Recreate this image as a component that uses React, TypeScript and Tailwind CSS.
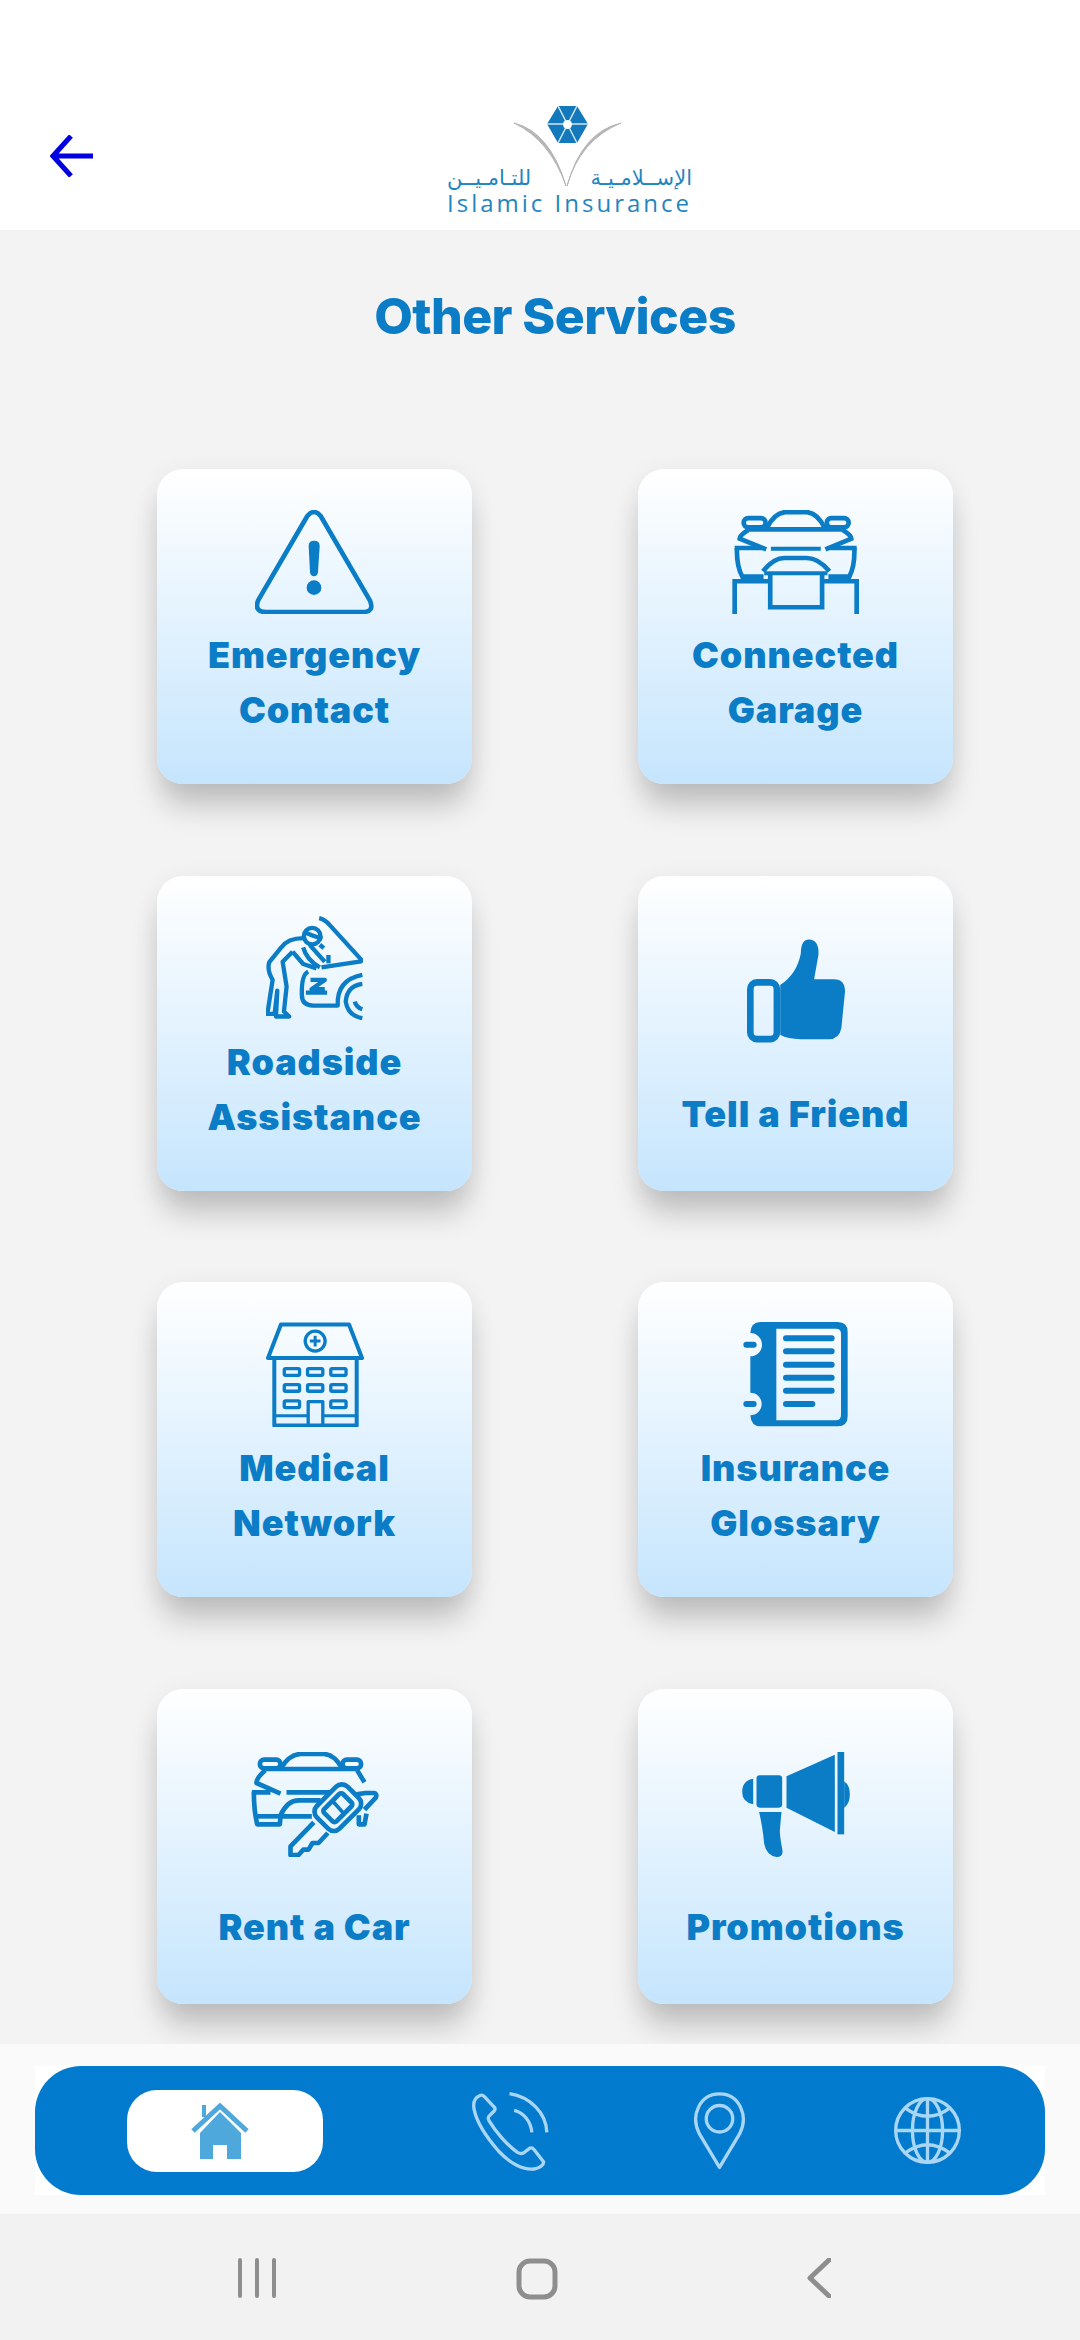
import React from 'react';

const Warning = () => (
  <svg width="119" height="104" viewBox="345 178 357 312" fill="none" stroke="currentColor" strokeWidth="14">
    <path d="M502 196 Q522 172 542 196 L690 450 Q704 484 668 484 L378 484 Q342 484 354 450 Z" strokeLinejoin="round" />
    <path d="M506 286 Q506 270 522 270 Q539 270 539 286 L534 365 Q532 377 522 377 Q512 377 510 365 Z" fill="currentColor" stroke="none" />
    <circle cx="522" cy="411" r="22" fill="currentColor" stroke="none" />
  </svg>
);

const Garage = () => (
  <svg width="127" height="104" viewBox="335 178 382 312" fill="none" stroke="currentColor" strokeWidth="14">
    <path d="M440 232 Q462 186 495 184 L560 184 Q592 186 614 232" strokeLinejoin="round" />
    <rect x="370" y="202" width="66" height="28" rx="14" />
    <rect x="620" y="202" width="66" height="28" rx="14" />
    <path d="M384 238 Q358 254 358 264 L438 296 M668 238 Q694 254 694 264 L616 296" />
    <path d="M384 236 H668" />
    <path d="M452 294 H602" strokeWidth="12" />
    <path d="M343 292 H425 M628 292 H710" />
    <path d="M350 292 Q348 345 366 378 H430 M703 292 Q705 345 688 378 H625" />
    <path d="M428 362 Q460 322 492 322 L560 322 Q595 322 628 362" />
    <path d="M432 368 H622" strokeWidth="12" />
    <path d="M450 368 V470 H606 V368" />
    <path d="M343 491 V392 H450 M606 392 H710 V491" />
  </svg>
);

const Mechanic = () => (
  <svg width="97" height="104" viewBox="378 168 292 312" fill="none" stroke="currentColor" strokeWidth="13" strokeLinejoin="round">
    <path d="M538 174 Q556 178 570 195 L664 298 L664 304 L545 322" />
    <circle cx="517" cy="228" r="25" />
    <path d="M497 218 Q520 228 548 236 M540 254 L552 264" />
    <path d="M497 234 Q445 232 424 262 L388 306 Q380 330 398 360 L382 462 H404 L412 392 L408 470 H448 L432 455 L440 380 L428 305 L458 275" />
    <path d="M490 262 Q500 300 540 322 M510 255 L555 305 M566 285 V310" />
    <path d="M458 275 L490 312 L530 325" />
    <path d="M505 335 Q484 345 486 405 Q486 436 520 437 H594 Q590 360 668 345" />
    <path d="M668 372 Q622 378 618 425 Q625 468 668 475" />
    <path d="M645 425 Q650 442 668 448" />
    <path d="M512 360 H555 L515 388 H555 M498 398 H562" />
  </svg>
);

const Thumb = () => (
  <svg width="98" height="104" viewBox="378 238 295 310" fill="none">
    <rect x="388" y="367" width="80" height="171" rx="20" stroke="currentColor" strokeWidth="20" />
    <path d="M478 375 Q528 342 540 280 Q540 238 565 238 Q596 240 593 285 L580 358 H640 Q673 358 673 395 L662 505 Q655 538 625 538 H540 Q500 538 478 525 Z" fill="currentColor" />
  </svg>
);

const Hospital = () => (
  <svg width="98" height="105" viewBox="105 65 295 315" fill="none" stroke="currentColor" strokeWidth="12" strokeLinejoin="round">
    <path d="M150 72 H355 L394 173 H111 Z" />
    <circle cx="253" cy="122" r="30" strokeWidth="10" />
    <path d="M253 106 V138 M237 122 H269" strokeWidth="9" />
    <path d="M130 173 V376 H378 V173" />
    <rect x="160" y="205" width="46" height="20" rx="4" strokeWidth="10" />
    <rect x="230" y="205" width="46" height="20" rx="4" strokeWidth="10" />
    <rect x="300" y="205" width="46" height="20" rx="4" strokeWidth="10" />
    <rect x="160" y="253" width="46" height="20" rx="4" strokeWidth="10" />
    <rect x="230" y="253" width="46" height="20" rx="4" strokeWidth="10" />
    <rect x="300" y="253" width="46" height="20" rx="4" strokeWidth="10" />
    <rect x="160" y="302" width="46" height="20" rx="4" strokeWidth="10" />
    <rect x="300" y="302" width="46" height="20" rx="4" strokeWidth="10" />
    <path d="M232 376 V304 H276 V376" strokeWidth="10" />
    <path d="M130 347 H232 M276 347 H378" strokeWidth="9" />
  </svg>
);

const Notebook = () => (
  <svg width="105" height="105" viewBox="98 65 315 315" fill="none">
    <path
      fillRule="evenodd"
      d="M150 65 H382 Q412 65 412 95 V348 Q412 378 382 378 H150 Q122 378 120 345 A34 34 0 0 0 120 277 V168 A34 34 0 0 0 120 98 Q122 65 150 65 Z M198 85 V360 H376 Q392 360 392 344 V100 Q392 85 376 85 Z"
      fill="currentColor"
    />
    <g stroke="currentColor" strokeWidth="18" strokeLinecap="round">
      <path d="M227 114 H364 M227 153 H364 M227 193 H364 M227 232 H364 M227 271 H364 M227 311 H306" />
      <path d="M108 133 H130 M108 311 H130" />
    </g>
  </svg>
);

const CarKey = () => (
  <svg width="128" height="105" viewBox="62 95 383 315" fill="none" stroke="currentColor" strokeWidth="14" strokeLinejoin="round">
    <path d="M152 142 Q178 102 210 101 L280 101 Q310 102 334 142" />
    <rect x="88" y="118" width="62" height="26" rx="13" />
    <rect x="336" y="118" width="56" height="26" rx="13" />
    <path d="M104 150 Q76 176 78 188 L150 220 M380 150 L402 186" />
    <path d="M104 146 H376" />
    <path d="M64 216 H120 M168 216 H310" />
    <path d="M70 216 Q70 270 80 312 H148 L150 288 H244" />
    <path d="M150 285 Q170 240 205 240 H270" />
    <path d="M80 288 H148" />
    <path d="M385 285 V312 H402 L408 280" />
    <path d="M378 222 L405 218 H432 Q440 222 436 232 L402 268" />
    <path d="M250 306 L180 378 V404 H204 L218 388 H234 L246 368 H264 L292 338" fill="#ecf6ff" />
    <rect x="257" y="214" width="130" height="96" rx="24" transform="rotate(-45 322 262)" fill="#ecf6ff" />
    <rect x="282" y="236" width="80" height="52" rx="8" transform="rotate(-45 322 262)" />
    <path d="M304 240 L344 284" strokeWidth="11" />
  </svg>
);

const Megaphone = () => (
  <svg width="108" height="105" viewBox="92 95 323 315" fill="currentColor">
    <path d="M125 175 Q92 180 92 215 Q92 245 125 252 Z" />
    <rect x="135" y="165" width="77" height="97" rx="10" />
    <path d="M225 168 L370 103 V335 L225 262 Z" />
    <rect x="378" y="95" width="20" height="247" />
    <path d="M398 183 Q415 195 415 222 Q415 250 398 263 Z" />
    <path d="M143 275 H210 L205 330 Q205 350 212 385 Q218 410 195 410 Q165 405 158 370 Q155 330 143 275 Z" />
  </svg>
);

const services = [
  { lines: ['Emergency', 'Contact'], icon: <Warning /> },
  { lines: ['Connected', 'Garage'], icon: <Garage /> },
  { lines: ['Roadside', 'Assistance'], icon: <Mechanic /> },
  { lines: ['Tell a Friend'], icon: <Thumb /> },
  { lines: ['Medical', 'Network'], icon: <Hospital /> },
  { lines: ['Insurance', 'Glossary'], icon: <Notebook /> },
  { lines: ['Rent a Car'], icon: <CarKey /> },
  { lines: ['Promotions'], icon: <Megaphone /> },
];

const ServiceCard = ({ lines, icon }: { lines: string[]; icon: React.ReactNode }) => {
  const single = lines.length === 1;
  return (
    <div
      className={`flex h-[315px] w-[315px] flex-col items-center rounded-[26px] bg-linear-to-b from-white to-[#c5e5fd] text-[#0b7cc6] shadow-[0_26px_30px_-4px_rgba(0,0,0,0.2),0_4px_26px_rgba(0,0,0,0.06)] ${single ? 'pt-[63px]' : 'pt-[40px]'}`}
    >
      <div className="flex h-[105px] items-center justify-center">{icon}</div>
      <div className={`text-center font-['Inter',sans-serif] text-[36px] leading-[55px] font-black tracking-[0.9px] whitespace-nowrap ${single ? 'mt-[43px]' : 'mt-[14px]'}`}>
        {lines.map((l) => (
          <div key={l}>{l}</div>
        ))}
      </div>
    </div>
  );
};

const Logo = () => (
  <div className="flex w-[245px] flex-col items-center text-[#1f86bf]">
    <svg width="110" height="82" viewBox="0 0 110 82" fill="none" className="ml-[-1px]">
      <path d="M0 17 Q36 26 52 80 Q36 34 0 17 Z M107 17 Q68 26 53 80 Q66 34 107 17 Z" fill="#b5b5b5" stroke="#b5b5b5" strokeWidth="1" />
      <path d="M44 0 H63 L74 18 L63 37 H44 L33 18 Z" fill="#1379bb" />
      <path d="M44 0 L63 37 M63 0 L44 37 M33 18 H74" stroke="#cfe6f5" strokeWidth="1.5" />
      <circle cx="53.5" cy="18.5" r="4.5" fill="white" />
    </svg>
    <div className="mt-[-24px] flex h-[28px] w-full items-center justify-between font-['DejaVu_Sans',sans-serif] text-[21px] leading-[28px]">
      <span dir="rtl">للتـامـيــن</span>
      <span dir="rtl">الإســلامـيـة</span>
    </div>
    <div className="mt-[-1px] font-['Open_Sans',sans-serif] text-[24px] leading-[24px] tracking-[3px] whitespace-nowrap">Islamic Insurance</div>
  </div>
);

export default function App() {
  return (
    <div className="flex h-[2340px] w-[1080px] flex-col overflow-hidden bg-[#f3f3f3] font-['Lato',sans-serif]">
      <header className="flex h-[230px] shrink-0 bg-white">
        <button className="mt-[135px] ml-[50px] h-[42px] w-[43px] text-[#0000e0]">
          <svg width="43" height="42" viewBox="0 0 43 42" fill="none" stroke="currentColor" strokeWidth="5">
            <path d="M43 21 H4 M21 1 L3 21 L21 41" />
          </svg>
        </button>
        <div className="mt-[106px] ml-[354px]">
          <Logo />
        </div>
      </header>

      <main className="flex h-[1814px] shrink-0 flex-col pr-[127px] pl-[157px]">
        <h1 className="mt-[56px] h-[60px] text-center font-['Inter',sans-serif] text-[50px] leading-[60px] font-extrabold tracking-[-0.6px] text-[#0b7cc6]">Other Services</h1>
        <div className="mt-[123px] grid grid-cols-[315px_315px] gap-x-[166px] gap-y-[91.6px]">
          {services.map((s) => (
            <ServiceCard key={s.lines[0]} lines={s.lines} icon={s.icon} />
          ))}
        </div>
      </main>

      <div className="relative flex h-[170px] shrink-0 items-start bg-[#fafafa] px-[35px] pt-[22px]">
        <nav className="relative h-[129px] w-[1012px] bg-white">
          <div className="flex h-full w-full items-center rounded-[46px] bg-[#027bce] pl-[92px]">
            <div className="flex h-[82px] w-[196px] items-center justify-center rounded-[30px] bg-white">
              <svg width="58" height="56" viewBox="0 0 58 56" fill="none" className="mr-[10px]">
                <path d="M9 30 L29 9 L50 30 V56 H36 V42 H22 V56 H9 Z" fill="#4fa8dc" />
                <path d="M2 28 L29 3 L56 28" stroke="#4fa8dc" strokeWidth="5" />
                <path d="M13 2 V14" stroke="#4fa8dc" strokeWidth="4" />
              </svg>
            </div>
            <svg width="77" height="80" viewBox="36 20 230 240" fill="none" stroke="#a9d6f5" strokeWidth="10" className="ml-[149px]">
              <path d="M58 34 C44 40 38 55 42 76 C50 115 80 160 115 200 C150 238 190 258 222 254 C240 252 252 240 250 232 L222 196 Q216 188 208 192 L190 206 Q182 210 172 204 C140 182 105 140 86 108 Q82 100 88 94 L102 80 Q108 72 100 66 L72 36 Q66 30 58 34 Z" strokeLinejoin="round" />
              <path d="M148 28 C210 38 258 85 260 144 M162 78 C190 85 212 110 215 144" />
            </svg>
            <svg width="55" height="80" viewBox="696 22 166 240" fill="none" stroke="#a9d6f5" strokeWidth="10" className="ml-[143px]">
              <path d="M779 252 L718 150 C690 95 720 30 779 30 C838 30 868 95 840 150 Z" strokeLinejoin="round" />
              <circle cx="779" cy="105" r="40" />
            </svg>
            <svg width="67" height="67" viewBox="1303 43 200 200" fill="none" stroke="#a9d6f5" strokeWidth="10" className="ml-[147px]">
              <circle cx="1403" cy="143" r="95" />
              <ellipse cx="1403" cy="143" rx="45" ry="95" />
              <path d="M1403 48 V238 M1308 143 H1498 M1337 76 Q1403 125 1469 76 M1337 210 Q1403 161 1469 210" />
            </svg>
          </div>
        </nav>
      </div>

      <div className="flex h-[126px] shrink-0 items-start bg-[#f2f2f2] pt-[44px] text-[#8e8e8e]">
        <svg width="38" height="40" viewBox="0 0 38 40" fill="none" stroke="currentColor" strokeWidth="4" strokeLinecap="round" className="ml-[238px]">
          <path d="M2 2 V38 M19 2 V38 M36 2 V38" />
        </svg>
        <svg width="42" height="42" viewBox="0 0 42 42" fill="none" stroke="currentColor" strokeWidth="5" className="ml-[240px]">
          <rect x="3" y="3" width="36" height="36" rx="11" />
        </svg>
        <svg width="24" height="40" viewBox="0 0 24 40" fill="none" stroke="currentColor" strokeWidth="5" strokeLinecap="round" strokeLinejoin="round" className="ml-[249px]">
          <path d="M22 2 L3 20 L22 38" />
        </svg>
      </div>
    </div>
  );
}
